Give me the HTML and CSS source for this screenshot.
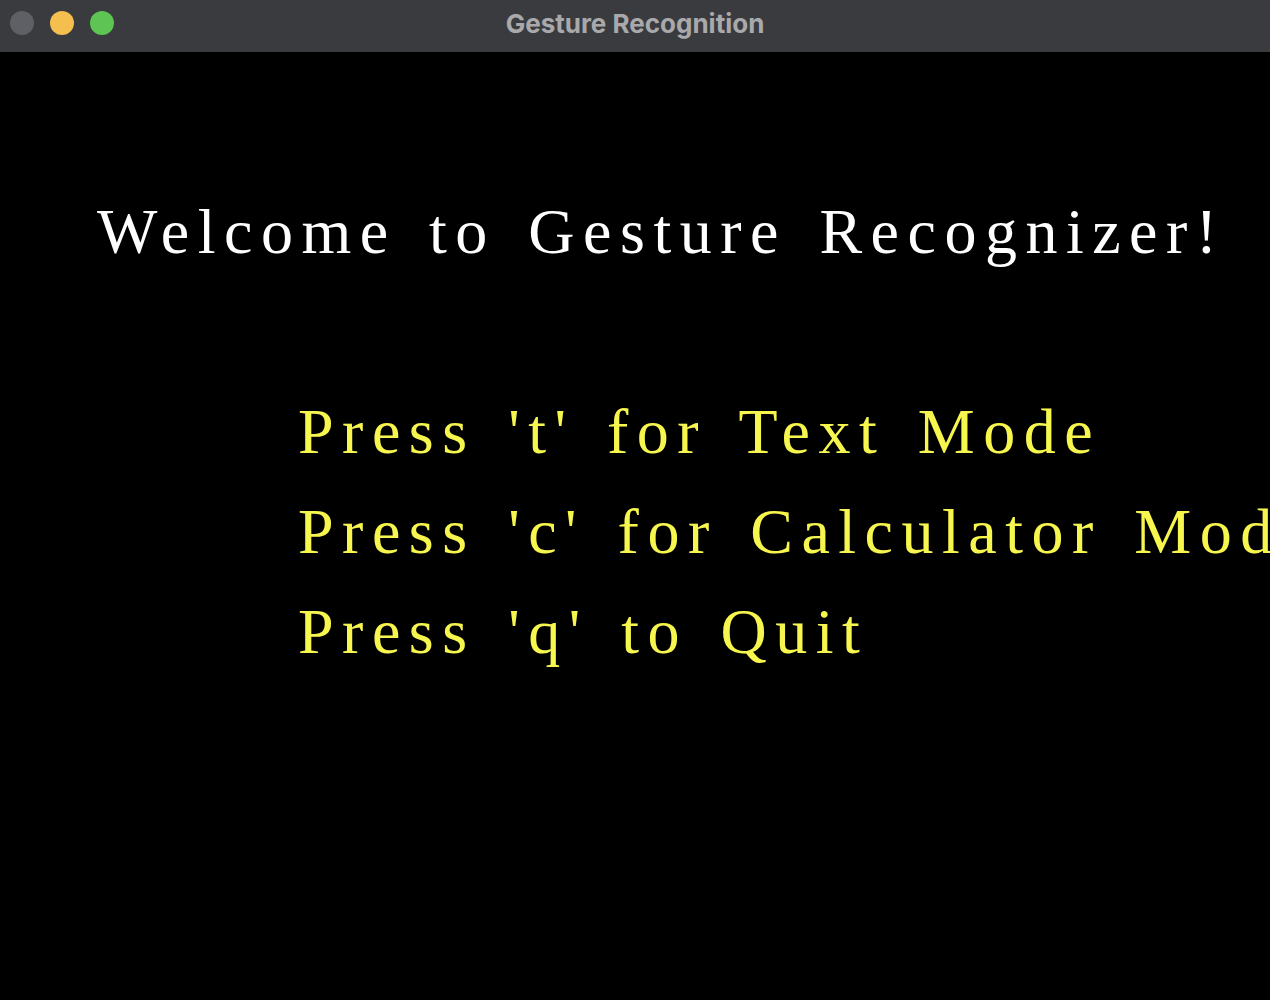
FILE: index.html
```html
<!DOCTYPE html>
<html>
<head>
<meta charset="utf-8">
<title>Gesture Recognition</title>
<link rel="stylesheet" href="styles.css">
</head>
<body>
<div class="window">
  <div class="titlebar">
    <div class="lights">
      <span class="light gray"></span>
      <span class="light yellow"></span>
      <span class="light green"></span>
    </div>
    <div class="title">Gesture Recognition</div>
  </div>
  <div class="canvas">
    <div class="welcome">Welcome to Gesture Recognizer!</div>
    <div class="menu">
      <div class="item">Press 't' for Text Mode</div>
      <div class="item">Press 'c' for Calculator Mode</div>
      <div class="item">Press 'q' to Quit</div>
    </div>
  </div>
</div>
</body>
</html>
```
FILE: styles.css
```css
html, body {
  margin: 0;
  padding: 0;
  background: #000;
  overflow: hidden;
}
.window {
  width: 1270px;
  height: 1000px;
  display: flex;
  flex-direction: column;
  background: #000;
}
.titlebar {
  height: 52px;
  flex: 0 0 52px;
  background: #3a3b3e;
  position: relative;
  display: flex;
  align-items: center;
  justify-content: center;
}
.lights {
  position: absolute;
  left: 10px;
  top: 11px;
  display: flex;
  gap: 16px;
}
.light {
  width: 24px;
  height: 24px;
  border-radius: 50%;
  display: block;
}
.light.gray { background: #5f6065; }
.light.yellow { background: #f5bf4f; }
.light.green { background: #5ec454; }
.title {
  font-family: "Inter", "Liberation Sans", sans-serif;
  font-weight: 700;
  font-size: 26px;
  color: #a9a9ac;
  margin-top: -6px;
}
.canvas {
  flex: 1;
  overflow: hidden;
  font-family: "Liberation Serif", serif;
  font-size: 64px;
  line-height: 100px;
  white-space: nowrap;
  letter-spacing: 8.5px;
  word-spacing: 8px;
}
.welcome {
  color: #ffffff;
  padding-left: 97px;
  margin-top: 130px;
}
.menu {
  margin-top: 100px;
  padding-left: 298px;
  color: #f6f64e;
}
```
